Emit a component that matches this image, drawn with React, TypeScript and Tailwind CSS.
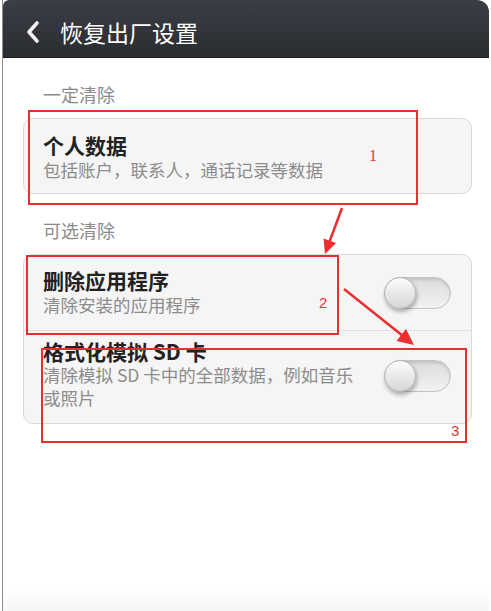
import React from 'react';

const cjk = { fontFamily: '"Noto Sans CJK SC", "Noto Sans", sans-serif' };

const Toggle: React.FC = () => (
  <div className="relative w-[67px] h-[32px] shrink-0 rounded-full border border-[#c4c4c4] bg-gradient-to-b from-[#dcdcdc] to-[#f2f2f2] shadow-[inset_0_2px_3px_rgba(0,0,0,0.12)]">
    <div className="absolute -left-px -top-px w-[32px] h-[32px] rounded-full border border-[#b5b5b5] bg-gradient-to-b from-[#fdfdfd] to-[#d6d6d6] shadow-[1px_3px_4px_rgba(0,0,0,0.3)]" />
  </div>
);

export default function App() {
  return (
    <div className="w-[491px] h-[611px] bg-white overflow-hidden relative pl-[2px] pr-[2px]" style={cjk}>
      <div className="h-full flex flex-col border-l border-[#8e8e8e]">
        {/* Title bar */}
        <div className="h-[58px] shrink-0 flex items-center pt-[6px] rounded-tl-[6px] rounded-tr-[12px] bg-gradient-to-b from-[#3b3e45] to-[#2a2c31] border-b border-[#1c1d20]">
          <svg width="18" height="24" viewBox="0 0 18 24" className="ml-[21px]">
            <path d="M13 3 L5 12 L13 21" fill="none" stroke="#f2f2f2" strokeWidth="3.6" strokeLinecap="round" strokeLinejoin="round" />
          </svg>
          <span className="ml-[18px] text-[23px] leading-[30px] text-white">恢复出厂设置</span>
        </div>

        {/* Content */}
        <div className="flex-1 flex flex-col">
          <div className="mt-[24px] pl-[40px] text-[18px] leading-[24px] text-[#8a8a8a]">一定清除</div>
          <div className="mt-[12px] ml-[20px] w-[449px] h-[76px] rounded-[10px] border border-[#d9d9d9] bg-[#f5f5f5] pl-[19px] pt-[14px]">
            <div className="text-[21px] leading-[25px] font-bold text-[#222]">个人数据</div>
            <div className="text-[17.5px] leading-[24px] text-[#8c8c8c]">包括账户，联系人，通话记录等数据</div>
          </div>

          <div className="mt-[24px] pl-[40px] text-[18px] leading-[24px] text-[#8a8a8a]">可选清除</div>
          <div className="mt-[12px] ml-[20px] w-[449px] h-[170px] rounded-[10px] border border-[#d9d9d9] bg-[#f5f5f5] flex flex-col">
            <div className="h-[76px] flex items-center justify-between pl-[19px] pr-[20px] border-b border-[#e1e1e1]">
              <div className="flex flex-col">
                <div className="text-[21px] leading-[25px] font-bold text-[#222]">删除应用程序</div>
                <div className="text-[17.5px] leading-[24px] text-[#8c8c8c]">清除安装的应用程序</div>
              </div>
              <Toggle />
            </div>
            <div className="flex-1 flex items-start justify-between pl-[19px] pr-[20px] pt-[8px]">
              <div className="flex flex-col w-[330px]">
                <div className="text-[21px] leading-[24px] font-bold text-[#222]">格式化模拟 SD 卡</div>
                <div className="text-[17.5px] leading-[23px] text-[#8c8c8c]">
                  清除模拟 SD 卡中的全部数据，例如音乐
                  <br />
                  或照片
                </div>
              </div>
              <div className="mt-[21px]">
                <Toggle />
              </div>
            </div>
          </div>

          <div className="flex-1" />
          <div className="h-[22px] bg-gradient-to-b from-white to-[#f6f6f6]" />
        </div>
      </div>

      {/* Annotation overlay */}
      <div className="absolute left-[28px] top-[110px] w-[390px] h-[95px] border-2 border-[#ec2d30]" />
      <span className="absolute left-[369px] top-[148px] text-[16px] leading-[16px] text-[#e5363a]" style={{ fontFamily: '"Liberation Serif", serif' }}>1</span>

      <div className="absolute left-[26px] top-[255px] w-[313px] h-[80px] border-2 border-[#ec2d30]" />
      <span className="absolute left-[319px] top-[295px] text-[15px] leading-[15px] text-[#e5363a]" style={{ fontFamily: '"Liberation Sans", sans-serif' }}>2</span>

      <div className="absolute left-[41px] top-[348px] w-[426px] h-[95px] border-2 border-[#ec2d30]" />
      <span className="absolute left-[451px] top-[423px] text-[15px] leading-[15px] text-[#e5363a]" style={{ fontFamily: '"Liberation Sans", sans-serif' }}>3</span>

      <svg className="absolute inset-0 pointer-events-none" width="491" height="611" viewBox="0 0 491 611">
        <line x1="342" y1="208" x2="329" y2="243" stroke="#ec2d30" strokeWidth="2.5" />
        <polygon points="325,254 336,243 323.5,238.5" fill="#ec2d30" />
        <line x1="344" y1="289" x2="403" y2="336" stroke="#ec2d30" strokeWidth="2.5" />
        <polygon points="414,345 396.5,341 406,329" fill="#ec2d30" />
      </svg>
    </div>
  );
}
